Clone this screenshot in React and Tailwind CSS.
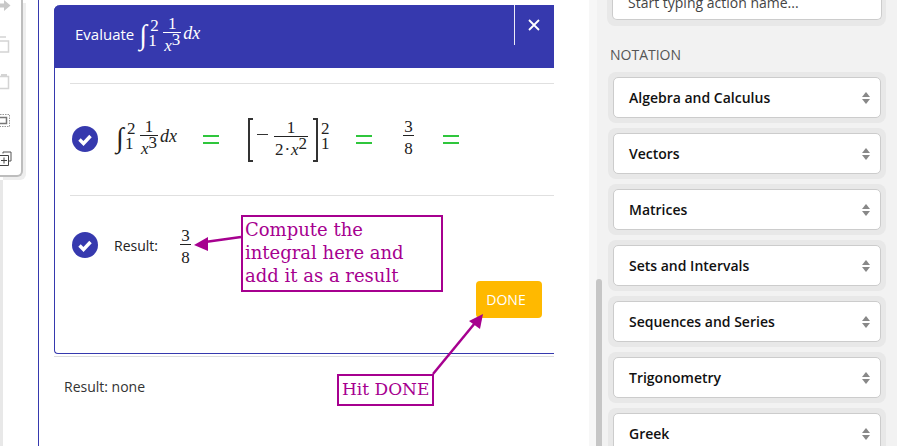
import React from 'react';

const notations = ['Algebra and Calculus', 'Vectors', 'Matrices', 'Sets and Intervals', 'Sequences and Series', 'Trigonometry', 'Greek'];

const Check = () => (
  <svg width="26" height="26" viewBox="0 0 26 26" className="shrink-0">
    <circle cx="13" cy="13" r="13" fill="#3639ae" />
    <path d="M7.500 13.500l4 4 7-7.500" fill="none" stroke="#fff" strokeWidth="3.400" />
  </svg>
);

// fraction: the bar sits 14px under the top of the block
const Frac = ({ top, bottom, barCls = 'bg-[#222]', cls = '' }) => (
  <span className={`inline-flex flex-col shrink-0 text-center ${cls}`}>
    <span className="h-[14px] leading-[12px]">{top}</span>
    <span className={`h-px ${barCls}`}></span>
    <span className="pt-[4px] leading-[17px]">{bottom}</span>
  </span>
);

const Sup = ({ children }) => <span className="relative -top-[6px]">{children}</span>;

const Limits = ({ lower = '' }) => (
  <span className="flex flex-col w-[8px] shrink-0 leading-[15px]">
    <span>2</span>
    <span className={lower}>1</span>
  </span>
);

const Integral = ({ light }) => (
  <span className={`flex w-[61px] h-[38px] shrink-0 font-['Liberation_Serif',serif] text-[17px] ${light ? 'text-white' : 'text-[#222]'}`}>
    <span className="w-[11px] shrink-0 text-[28px] leading-[34px] italic">∫</span>
    <Limits lower="-ml-[2px]" />
    <Frac
      top="1"
      bottom={<span className="whitespace-nowrap"><i>x</i><Sup>3</Sup></span>}
      barCls={light ? 'bg-white' : 'bg-[#222]'}
      cls="w-[18px] ml-[5px]"
    />
    <i className="ml-[2px] mt-[7px] leading-[17px] text-[18px]">dx</i>
  </span>
);

const Eq = ({ cls }) => (
  <span className={`w-4 h-[9px] shrink-0 border-y-[2.500px] border-[#2fc63c] ${cls}`}></span>
);

const ToolbarIcons = () => (
  <svg width="14" height="170" viewBox="0 0 14 170" fill="none">
    <path d="M0 3.500h4V0l6.500 5.500L4 11V7.500H0z" fill="#c8c8c8" />
    <path d="M0 37h6M0 41h8.500v11H0" stroke="#d4d4d4" strokeWidth="1.500" />
    <path d="M0 76.500h8.500v12H0" stroke="#d4d4d4" strokeWidth="1.500" />
    <path d="M1 74h6v3H1z" fill="#d4d4d4" />
    <path d="M0 114.500h9.500v12H0" stroke="#999" strokeDasharray="1.500 1" />
    <path d="M0 117.500h6.500v6H0" stroke="#777" strokeWidth="1.500" />
    <path d="M3 153.500V152h8v9h-2" stroke="#555" />
    <path d="M0 155.500h8.500v10H0" stroke="#444" />
    <path d="M4 157.500v6M1 160.500h6" stroke="#444" />
  </svg>
);

export default function App() {
  return (
    <div className="relative w-[897px] h-[446px] overflow-hidden flex bg-white font-['Open_Sans',sans-serif]">
      {/* left rail with toolbar */}
      <div className="w-[38px] shrink-0 flex flex-col">
        <div className="w-[23px] h-[177px] bg-white border-r-2 border-b-2 border-[#bdbdbd] rounded-br-[6px] shadow-[3px_3px_0_#eee]">
          <ToolbarIcons />
        </div>
        <div className="w-[3px] flex-1 bg-[#e8e8e8] mt-[3px]"></div>
      </div>

      {/* main column */}
      <div className="relative w-[551px] shrink-0 border-l border-[#3639ae] pl-[15px]">
        <div className="w-[500px] h-[349px] mt-[5px] border-l border-b border-[#3639ae] rounded-bl-[4px] rounded-tl-[6px]">
          <div className="relative h-[63px] -ml-px bg-[#3639ae] rounded-tl-[6px] flex items-center pl-[21px] text-white">
            <span className="text-[15px] mr-[5px] mb-[4px]">Evaluate</span>
            <Integral light />
            <span className="absolute left-[460px] top-0 w-px h-[40px] bg-white/90"></span>
            <svg width="12" height="12" viewBox="0 0 12 12" className="absolute left-[474px] top-[14px]">
              <path d="M1 1l10 10M11 1L1 11" stroke="#fff" strokeWidth="1.800" />
            </svg>
          </div>
          <div className="ml-[15px] mt-[15px] h-[113px] border-y border-[#e0e0e0] flex items-center font-['Liberation_Serif',serif] text-[17px] text-[#222]">
            <span className="ml-[2px] mb-[2px] flex"><Check /></span>
            <span className="ml-[18px]"><Integral /></span>
            <Eq cls="ml-[26px] mb-px" />
            <span className="ml-[29px] w-[5px] h-[44px] shrink-0 border-y-2 border-l-2 border-[#333]"></span>
            <span className="ml-[4px] w-[11px] h-px shrink-0 bg-[#333] mb-[10px]"></span>
            <Frac
              top="1"
              bottom={<span className="whitespace-nowrap">2<span className="mx-[1px]">·</span><i>x</i><Sup>2</Sup></span>}
              cls="ml-[6px] w-[34px]"
            />
            <span className="ml-[5px] w-[5px] h-[44px] shrink-0 border-y-2 border-r-2 border-[#333]"></span>
            <span className="ml-[3px] h-[38px] flex"><Limits /></span>
            <Eq cls="ml-[27px] mb-px" />
            <Frac top="3" bottom="8" cls="ml-[31px] w-[11px] mb-[2px]" />
            <Eq cls="ml-[29px] mb-px" />
          </div>
          <div className="ml-[15px] mt-[36px] h-[26px] flex items-center text-[#222]">
            <span className="ml-[2px] flex"><Check /></span>
            <span className="ml-[16px] text-[14px]">Result:</span>
            <Frac top="3" bottom="8" cls="ml-[22px] w-[11px] mt-[6px] font-['Liberation_Serif',serif] text-[17px]" />
          </div>
        </div>
        <div className="mt-[2px] h-px w-[500px] bg-[#ddd]"></div>
        <p className="ml-[10px] mt-[20px] text-[14px] leading-[20px] text-[#333]">Result: none</p>
      </div>

      {/* right panel */}
      <div className="relative flex-1 bg-[#f2f2f2] border-l-[8px] border-[#f7f7f7] pl-[13px]">
        <div className="w-[279px] h-[26px] -ml-[3px] bg-[#e8e8e8] px-[5px] rounded-b-[8px]">
          <div className="w-[270px] h-[20px] overflow-hidden bg-white border border-[#ccc] border-t-0 rounded-b-[5px] pl-[15px] text-[14px] leading-[20px] text-[#444]">
            <span className="block -mt-[7px] whitespace-nowrap">Start typing action name...</span>
          </div>
        </div>
        <p className="mt-[20px] text-[14px] leading-[18px] text-[#555]">NOTATION</p>
        <div className="mt-[8px] flex flex-col gap-[5px] -ml-[2px]">
          {notations.map((n) => (
            <div key={n} className="w-[278px] h-[51px] shrink-0 bg-[#e8e8e8] rounded-[8px] p-[5px]">
              <div className="h-[41px] bg-white border border-[#ccc] rounded-[5px] flex items-center justify-between pl-[15px] pr-[10px] text-[14px] font-semibold text-[#111]">
                <span>{n}</span>
                <span className="flex flex-col gap-[2px]">
                  <span className="w-0 h-0 border-x-[4px] border-x-transparent border-b-[5px] border-b-[#888]"></span>
                  <span className="w-0 h-0 border-x-[4px] border-x-transparent border-t-[5px] border-t-[#888]"></span>
                </span>
              </div>
            </div>
          ))}
        </div>
        <div className="absolute left-[-1px] top-[279px] w-[6px] h-[180px] rounded-full bg-[#c6c6c6]"></div>
      </div>

      {/* callouts */}
      <button className="absolute left-[476px] top-[281px] w-[66px] h-[37px] bg-[#ffb900] rounded-[4px] text-white text-[14px] font-medium pr-[6px]">DONE</button>
      <div className="absolute left-[241px] top-[215px] w-[202px] h-[77px] bg-white border-2 border-[#a6008f] pl-[2px] pt-px font-['DejaVu_Serif',serif] text-[18px] leading-[23px] whitespace-nowrap text-[#a6008f]">
        Compute the<br />integral here and<br />add it as a result
      </div>
      <div className="absolute left-[337px] top-[374px] w-[97px] h-[32px] bg-white border-2 border-[#a6008f] pl-[3px] font-['DejaVu_Serif',serif] text-[17px] leading-[27px] whitespace-nowrap text-[#a6008f]">Hit DONE</div>
      <svg width="897" height="446" className="absolute left-0 top-0 pointer-events-none">
        <path d="M241 237L205 242" stroke="#a6008f" strokeWidth="2.500" />
        <path d="M194 245L208 237L208 251z" fill="#a6008f" />
        <path d="M433 374L475 323" stroke="#a6008f" strokeWidth="2.500" />
        <path d="M483 314L480 329L469 321z" fill="#a6008f" />
      </svg>
    </div>
  );
}
